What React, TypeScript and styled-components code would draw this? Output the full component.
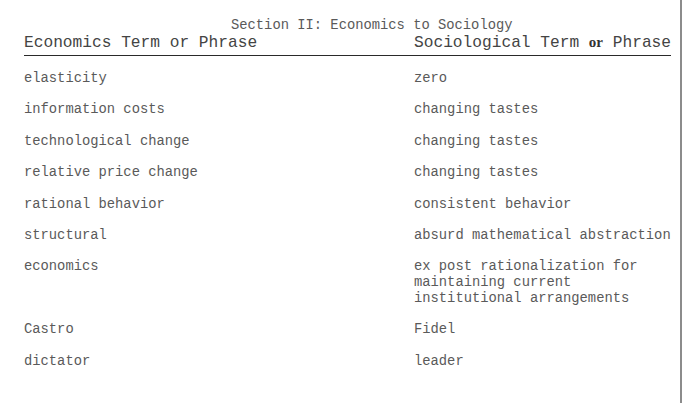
import React from "react";
import styled, { createGlobalStyle } from "styled-components";

const Global = createGlobalStyle`
  html, body { margin: 0; padding: 0; background: #fff; }
  body { font-family: "Liberation Mono", "Courier New", monospace; }
`;

const Page = styled.div`
  width: 682px;
  height: 403px;
  border-right: 2px solid #8c8c8c;
  box-sizing: border-box;
  padding: 18px 0 0 24px;
  color: #4a4a4a;
`;

const Title = styled.div`
  font-size: 13.8px;
  line-height: 16px;
  padding-left: 207px;
  color: #5a5a5a;
`;

const Table = styled.div`
  width: 646px;
  display: grid;
  grid-template-columns: 390px 1fr;
`;

const Header = styled.div`
  font-size: 16.2px;
  line-height: 19px;
  color: #444;
  border-bottom: 1.5px solid #2a2a2a;
  padding-bottom: 1.5px;
  white-space: nowrap;
`;

const Bold = styled.span`
  font-weight: bold;
  font-family: "Liberation Serif", "Times New Roman", serif;
  font-size: 15px;
  line-height: 0;
  color: #333;
`;

const Cell = styled.div<{ $first?: boolean }>`
  font-size: 13.8px;
  line-height: 15.7px;
  padding-top: ${(p) => (p.$first ? "15.5px" : "15.7px")};
  white-space: pre-line;
  color: #5a5a5a;
`;

const rows: [string, string][] = [
  ["elasticity", "zero"],
  ["information costs", "changing tastes"],
  ["technological change", "changing tastes"],
  ["relative price change", "changing tastes"],
  ["rational behavior", "consistent behavior"],
  ["structural", "absurd mathematical abstraction"],
  [
    "economics",
    "ex post rationalization for\nmaintaining current\ninstitutional arrangements",
  ],
  ["Castro", "Fidel"],
  ["dictator", "leader"],
];

export default function App() {
  return (
    <>
      <Global />
      <Page>
        <Title>Section II: Economics to Sociology</Title>
        <Table>
          <Header>Economics Term or Phrase</Header>
          <Header>
            Sociological Term <Bold>or</Bold> Phrase
          </Header>
          {rows.map(([a, b], i) => (
            <React.Fragment key={i}>
              <Cell $first={i === 0}>{a}</Cell>
              <Cell $first={i === 0}>{b}</Cell>
            </React.Fragment>
          ))}
        </Table>
      </Page>
    </>
  );
}
